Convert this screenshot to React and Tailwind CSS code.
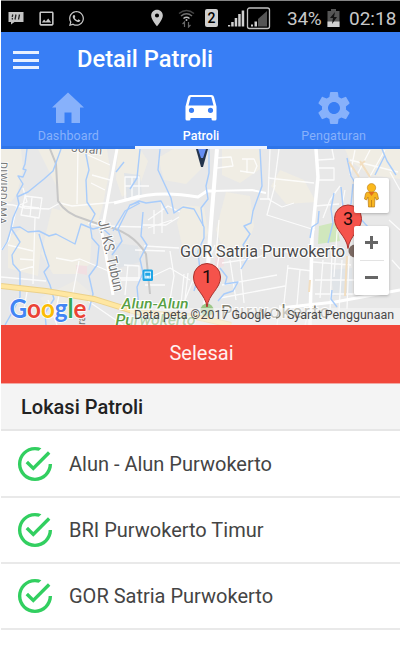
import React from "react";
import { IoMdCheckmarkCircleOutline } from "react-icons/io";
import { MdLocationOn, MdOutlineImage, MdSettings } from "react-icons/md";
import { FaWhatsapp } from "react-icons/fa";

function BbmIcon() {
  return (
    <svg className="h-4 w-4" viewBox="0 0 16 16">
      <path d="M.500 2h15v10h-9l-3.500 2.500V12H.500z" fill="#c4c4c4" />
      <path d="M4.800 4.500l-.6 2.500M8 4.500l-1 5M11.500 4.500l-1 5M4.500 8l-.3 1.500" stroke="#222" strokeWidth="1.300" />
    </svg>
  );
}

function WifiIcon() {
  return (
    <svg className="h-[19px] w-[17px]" viewBox="0 0 17 19" fill="none">
      <path d="M1 4.500q7.500-6 15 0" stroke="#444" strokeWidth="1.500" />
      <path d="M3 7q5.500-4.500 11 0" stroke="#707070" strokeWidth="1.500" />
      <path d="M5.500 9.500q3-2.500 6 0" stroke="#bbb" strokeWidth="1.500" />
      <circle cx="8.500" cy="11" r="1" fill="#bbb" />
      <path d="M6.500 18v-5l-2 2M10.500 13v5l2-2" stroke="#666" strokeWidth="1.200" />
    </svg>
  );
}

function SignalIcons() {
  return (
    <svg className="h-[23px] w-[44px]" viewBox="0 0 44 23">
      <g fill="#d0d0d0">
        <path d="M1 18h2.200v1.500H1zM4.200 15h2.500v4.500H4.200zM7.700 11h2.500v8.500H7.700zM11.200 7h2.500v12.500h-2.500zM14.700 3.500h2.500v16h-2.500z" />
        <path d="M24 17.500h2v2h-2zM27.500 14.500h2.500v5h-2.500z" />
      </g>
      <path d="M31 12l9-8v15.500h-9z" fill="#555" />
      <rect x="20.500" y="1" width="22" height="20.500" rx="2" fill="none" stroke="#c0c0c0" strokeWidth="1.300" />
    </svg>
  );
}

function BatteryIcon() {
  return (
    <svg className="h-[18px] w-[13px]" viewBox="0 0 13 18">
      <path d="M4 0h5v2h3.500v16H.500V2H4z" fill="#555" />
      <path d="M.500 12.500h12V18H.500z" fill="#d0d0d0" />
      <path d="M8 3L3 9h3l-1 6 5-7H7z" fill="#111" />
    </svg>
  );
}

function StatusBar() {
  return (
    <div className="flex h-8 items-center border-t border-[#858585] bg-black pt-[3px] text-[#c8c8c8]">
      <div className="ml-[7px]"><BbmIcon /></div>
      <MdOutlineImage className="ml-[13px] h-[19px] w-[19px]" />
      <FaWhatsapp className="ml-[12px] h-[17px] w-[17px]" />
      <MdLocationOn className="ml-[62px] h-5 w-5" />
      <div className="ml-[11px]"><WifiIcon /></div>
      <div className="ml-[10px] flex h-[18px] w-[13px] items-center justify-center rounded-[2px] bg-[#cfcfcf] text-[14px] font-medium leading-none text-black">2</div>
      <div className="ml-[9px]"><SignalIcons /></div>
      <span className="ml-[16px] w-[36px] whitespace-nowrap text-[19px] leading-none tracking-[-0.3px]">34%</span>
      <div className="ml-[4px]"><BatteryIcon /></div>
      <span className="ml-[9px] whitespace-nowrap text-[19px] leading-none">02:18</span>
    </div>
  );
}

function HomeIcon() {
  return (
    <svg className="h-[38px] w-[38px]" viewBox="0 0 38 38" fill="currentColor">
      <path d="M19 3.500l16 15h-4v15.500h-8.500V23.500h-7V34H7V18.500H3z" />
    </svg>
  );
}

function CarIcon() {
  return (
    <svg className="h-[38px] w-[38px]" viewBox="0 0 38 38" fill="currentColor">
      <path
        fillRule="evenodd"
        d="M8.500 6h21q2 0 2.500 2l2.500 9.500V30q0 1.500-1.500 1.500h-2q-1.500 0-1.500-1.500v-1h-21v1q0 1.500-1.500 1.500H5q-1.500 0-1.500-1.500V17.500L6 8q.5-2 2.500-2zM8.700 8L6.500 16.500h25L29.300 8zM9.500 18.700a2.600 2.600 0 1 0 0 5.200 2.600 2.600 0 0 0 0-5.200zM28.500 18.700a2.600 2.600 0 1 0 0 5.200 2.600 2.600 0 0 0 0-5.200z"
      />
    </svg>
  );
}

function GearIcon() {
  return <MdSettings className="h-[40px] w-[40px] shrink-0" />;
}

function Tab({ icon: Icon, label, active }) {
  return (
    <div className={`flex flex-1 flex-col items-center border-b-[3px] ${active ? "border-[#eef4ff] text-white" : "border-[#2f75e8] text-[#87b1fb]"}`}>
      <div className="flex h-[37px] items-center"><Icon /></div>
      <span className={`mt-[1.5px] text-[12.5px] leading-4 ${active ? "font-medium" : "tracking-[0.1px]"}`}>{label}</span>
    </div>
  );
}

function Pin({ x, y, label }) {
  return (
    <g transform={`translate(${x} ${y})`}>
      <path d="M0 0C-1.500-13-13.500-18-13.500-30a13.500 13.500 0 0 1 27 0C13.500-18 1.500-13 0 0z" fill="#f5534b" stroke="#a9332d" strokeWidth="1" />
      <text x="0" y="-24" textAnchor="middle" fontSize="18" fill="#1a0b0b">{label}</text>
    </g>
  );
}

function CityMap() {
  return (
    <svg className="block h-full w-full" viewBox="1 149 399 176" preserveAspectRatio="none">
      <rect x="1" y="149" width="399" height="176" fill="#e8e8e8" />
      <g fill="#f0ede4">
        <path d="M1 149h20l2 20-6 25-6 8-10-2z" />
        <path d="M38 149h69l3 20-8 40-5 16-20 4-17-20-3-22-8-16z" />
        <path d="M52 208l28 8 12 14-2 34-12 10-25 0-12-20z" />
        <path d="M118 149h22l8 12-8 24-18 12-6-18z" />
        <path d="M173 149h30l-2 20-15 15-22-4-6-22z" />
        <path d="M182 205l22 2 4 26-12 20-14-8-5-22z" />
        <path d="M226 192l24 4 4 30-10 30-20-4-8-22z" />
        <path d="M222 149h38v20l-20 14-18-8z" />
        <path d="M280 170l24 10 12 22-30 2-15-18z" />
        <path d="M345 149h55v30l-30-4-20-14z" />
        <path d="M8 238l14-10 20 8-4 40-30-8z" />
        <path d="M40 298l36-18 14 12-6 20-30 4z" opacity=".6" />
      </g>
      <path d="M319 226l17-4 4 19-22 3z" fill="#d0e7bd" />
      <path d="M76 265l11 1v9l-10-2zM215 258l9-2v10l-9 3z" fill="#f1dfe2" />
      <path d="M110 242l28 4 2 16-28 8zM330 270l22-2v26l-18 2zM124 173l16 2 2 20-15 4z" fill="#e0e4e8" />
      <g fill="none" stroke="#fff" strokeWidth="1.300" strokeLinejoin="round" opacity=".85">
        <path d="M1 204l12 1 12 3 24 1 11-6 12 3 45-4 22-7" />
        <path d="M25 196l17 2-3 20-18-3z M32 197l-2 20M22 206l17 2M35 218l-2 66M1 250l8-10 5-21 3-13 10-4-4-14M8 245l25 6M20 259l14 1M20 270l14-4" />
        <path d="M78 149l-1 55M56 258l16 3 8-2 26 11 12 5M79 261l-7 37M60 290l-5 25M103 226l40 1M108 228l-20-5M110 180l-18-5M105 190l-14-7M88 155l22 10" />
        <path d="M125 177h14v22h-14zM132 177v22M125 186h24M124 265l15 1v14h-18M128 265l-3 30M112 278h30" />
        <path d="M142 225h24l13-8M148 220l20-14 12 6M148 228l24-8M154 210v24M162 203v30M144 246l35 2M135 250l30 1M153 276l17-8 20 12M170 251l4 25-4 24M145 285h20M184 274l-3 30M188 273l-4 35M193 280l-10 25" />
        <path d="M215 158l16-1 2 9-16 2M242 159h12l3 7-3 7-14-2M247 159v14M219 220l-3 35M215 245l-6 14M220 250l-4 24M222 263l35-5 20-10M230 260l6 40M240 258l4 45M222 285l55-10M220 298l65-12" />
        <path d="M270 149l-2 50 14 8 12-4M279 149l-5 38M268 178l46 5M270 199h-10M275 185l-8 30 48 15M318 160l16-1-2-10M318 168h16v12h-16M260 248l54 8M288 265l-4 38M288 268l24 3M300 270l-3 35" />
        <path d="M315 206l24-2M340 186l-10 14-7 18M345 190l-8 42-3 45M313 262l38 3M323 260l-3 38M332 252l-2 60M342 260l-3 51M349 256l-2 53M315 280h43M315 294h42" />
        <path d="M355 150l-5 25M370 150l-13 25M385 150l-20 35M350 160l48 12M390 172l10 18M389 220l11 10M392 260l8 9" />
        <path d="M1 277l45 4M28 286l-5 29M88 301l35 24M48 300l9 25M280 305l-3 20M310 305l-5 20" />
      </g>
      <path d="M50 149l6 15 2 37q8 13 26 18l20 7q28 5 42 28l4 40" fill="none" stroke="#c7c7c7" strokeWidth="2" />
      <g fill="none" stroke="#fff" strokeLinejoin="round">
        <path d="M117 149l-15 82M102 233l11 62" strokeWidth="3" />
        <path d="M114 203l16-4q28-9 68-2l9-6h9" strokeWidth="3" />
        <path d="M217 149l-6 74-7 99" strokeWidth="4" />
        <path d="M316 149l2 28-6 60-2 88" strokeWidth="3.500" />
        <path d="M212 191l40-1 14 3" strokeWidth="2" />
        <path d="M280 308l55-6 65-12" strokeWidth="3" />
      </g>
      <g fill="none" stroke="#a8ccfb" strokeWidth="1.400" strokeLinejoin="round">
        <path d="M27 149l-2 15-2 5 3 1-3 7-5-1 5 8-6 11 2 9-6 14-2 10 9-1 8 5 11-1 10 5 7-2 19 10 6-20 12 5 8-2 9 8" />
        <path d="M61 149l-8 22-9 8-16 13-11 5M11 229l-4 13-5 8M11 228l9 14-8 13 1 9 7 8v25l-6 12-9 16M39 234l6 20 4 12-5 6 6 13 4 14-9 14 1 12M85 149l4 21-3 10 1 22 8 12-5 10 2 14 7 8-2 19-8 11 4 18-4 16M113 231l12-20 15-8M112 255l10-14-4-12" />
        <path d="M124 162l-8 10M139 202l-9 3-13 26M140 149l-3 29-7 11M160 149l-2 21 13 28 3 15 9-6 11 2 10 18v11l-6 13 2 20-6 20M131 205l8-4 7 2 15-2 7 13M143 212l-2 24 6 9-7 14 3 14-6 14 2 22" />
        <path d="M209 149v24l-3 13 2 13-7 9 2 18M260 149l2 37-9 25-2 12-7 3 6 8-7 11 6 11-8 13M220 268l7 9-2 7 13-2-5 9-9 3-6 7" />
        <path d="M347 158l4 18 6 10M353 184l-2 20-7 8 5 20M334 193l-3 16 2 14-5 20M319 211l-1 12-6 4-2 11M341 187l2 20M357 215l11 12M332 290l-1 9 6 8" />
        <path d="M382 149l5 12 9 14M385 155l-10 20" />
      </g>
      <path d="M349 162l10 15M360 161l10 16M365 161l-5 4M310 280l-1 12M347 256l-2 40" fill="none" stroke="#f2dec0" strokeWidth="2" />
      <path d="M1 286l45 5 48 8 42 13 60 5 35 8" fill="none" stroke="#ecd18a" strokeWidth="6" />
      <path d="M1 286l45 5 48 8 42 13 60 5 35 8" fill="none" stroke="#ffe7a2" strokeWidth="4" />
      <g fill="#777">
        <text x="71" y="151.500" fontSize="12" textLength="31" lengthAdjust="spacingAndGlyphs" transform="rotate(6 71 151.500)" stroke="#fff" strokeWidth="1.500" paintOrder="stroke">Joran</text>
        <text x="0" y="162" fontSize="10.500" textLength="62" transform="rotate(91 0 162)" stroke="#fff" strokeWidth="1.500" paintOrder="stroke">DIWIRDAMA</text>
        <text x="98" y="221" fontSize="14.500" textLength="73" lengthAdjust="spacingAndGlyphs" transform="rotate(77 98 221)" stroke="#fff" strokeWidth="2" paintOrder="stroke">Jl. KS. Tubun</text>
        <text x="85" y="325" fontSize="11" transform="rotate(-88 85 325)">ra</text>
      </g>
      <g transform="translate(142.500 269.500)">
        <rect width="10.500" height="11.500" rx="1.500" fill="#20a5e6" />
        <path d="M2 2h6.500v7H2z" fill="#e7f7ff" />
        <path d="M3 3.500h4.500V6H3zM3 7.500h1.200M6.300 7.500h1.200" fill="#20a5e6" stroke="#20a5e6" strokeWidth=".6" />
      </g>
      <circle cx="207" cy="310" r="6.500" fill="#9bc786" />
      <g fill="#58a044" fontStyle="italic" fontWeight="500" stroke="#fff" strokeWidth="2" paintOrder="stroke">
        <text x="121.500" y="308.500" fontSize="14.500" textLength="67" lengthAdjust="spacingAndGlyphs">Alun-Alun</text>
        <text x="115.500" y="325" fontSize="14.500" textLength="80" lengthAdjust="spacingAndGlyphs">Purwokerto</text>
      </g>
      <text x="221" y="318" fontSize="18" textLength="109" fill="#84806f" stroke="#fff" strokeWidth="2" paintOrder="stroke">Purwokerto</text>
      <path d="M196 149h12l-5 18h-2z" fill="#24344c" />
      <path d="M198 149h8l-3 9h-2z" fill="#648df2" />
      <Pin x={207} y={307} label="1" />
      <circle cx="355" cy="251" r="6.500" fill="#7b6962" />
      <Pin x={348} y={248.5} label="3" />
      <text x="180" y="256.500" fontSize="17" textLength="165" lengthAdjust="spacingAndGlyphs" fill="#4b4b4b" stroke="#fff" strokeWidth="2" paintOrder="stroke">GOR Satria Purwokerto</text>
      <rect x="130" y="308" width="270" height="17" fill="#f5f5f5" opacity=".6" />
      <g fontSize="12" fill="#4a4a4a">
        <text x="134" y="318.500" textLength="137" lengthAdjust="spacingAndGlyphs">Data peta ©2017 Google</text>
        <path d="M276 310a4 4 0 0 1 0 8" fill="none" stroke="#817d70" strokeWidth="1.500" />
        <text x="287" y="318.500" textLength="107" lengthAdjust="spacingAndGlyphs">Syarat Penggunaan</text>
      </g>
    </svg>
  );
}

function GoogleLogo() {
  return (
    <svg className="h-[32px] w-[82px]" viewBox="0 0 82 32" fill="none">
      <text
        x="1.500" y="20.500" fontSize="26" fontWeight="700" textLength="77" lengthAdjust="spacingAndGlyphs"
        stroke="#fff" strokeWidth="1.500" paintOrder="stroke"
        className="font-[Lato,Roboto,sans-serif]"
      >
        <tspan fill="#4285f4">G</tspan><tspan fill="#ea4335">o</tspan><tspan fill="#fbbc05">o</tspan><tspan fill="#4285f4">g</tspan><tspan fill="#34a853">l</tspan><tspan fill="#ea4335">e</tspan>
      </text>
    </svg>
  );
}

function MapControls() {
  return (
    <div className="flex flex-col gap-[13px]">
      <div className="flex h-[35px] w-[35px] items-center justify-center rounded-[2px] bg-white shadow-[0_1px_3px_rgba(0,0,0,0.25)]">
        <svg className="h-[25px] w-[15px]" viewBox="0 0 15 25">
          <path d="M4 9h7q2 0 2.500 2l1 5-2 1-1.500-3-.5 10H4.500L4 14l-1.500 3-2-1 1-5Q2 9 4 9z" fill="#f7b521" stroke="#b97b17" strokeWidth=".7" />
          <circle cx="7.500" cy="4.800" r="4.200" fill="#fbb91c" stroke="#b97b17" strokeWidth=".6" />
          <path d="M4.500 9l3 4 3-4z" fill="#e06d22" />
          <path d="M7.500 17v7" stroke="#b97b17" strokeWidth=".8" />
        </svg>
      </div>
      <div className="flex h-[69px] w-[35px] flex-col items-center rounded-[2px] bg-white shadow-[0_1px_3px_rgba(0,0,0,0.25)]">
        <svg className="h-[34px] w-[13px]" viewBox="0 0 13 34"><path d="M0 16.500h13M6.500 10v13" stroke="#666" strokeWidth="3" /></svg>
        <div className="h-px w-6 bg-[#e3e3e3]" />
        <svg className="h-[34px] w-[13px]" viewBox="0 0 13 34"><path d="M0 16.500h13" stroke="#666" strokeWidth="3" /></svg>
      </div>
    </div>
  );
}

function PatrolRow({ name }) {
  return (
    <li className="flex h-[66.3px] items-center border-b-2 border-[#e9e9e9] pl-[13px] text-[#444]">
      <IoMdCheckmarkCircleOutline className="h-[42px] w-[42px] shrink-0 text-[#32cf60]" />
      <span className="ml-[13px] whitespace-nowrap text-[20px] leading-none">{name}</span>
    </li>
  );
}

export default function App() {
  return (
    <div className="h-[668px] w-[400px] overflow-hidden bg-white pl-px font-[Roboto,sans-serif]">
      <StatusBar />
      <header className="h-[117px] bg-[#387ef5]">
        <div className="flex h-[57px] items-center pb-[2px] pl-[12px] text-white">
          <div className="mt-[1px] flex w-[26px] flex-col gap-[4.5px]">
            <div className="h-[3px] bg-[#e8f0ff]" />
            <div className="h-[3px] bg-[#e8f0ff]" />
            <div className="h-[3px] bg-[#e8f0ff]" />
          </div>
          <h1 className="ml-[38px] whitespace-nowrap text-[23.7px] font-medium leading-none">Detail Patroli</h1>
        </div>
        <nav className="flex h-[60px] pl-px">
          <Tab icon={HomeIcon} label="Dashboard" />
          <Tab icon={CarIcon} label="Patroli" active />
          <Tab icon={GearIcon} label="Pengaturan" />
        </nav>
      </header>
      <section className="relative h-[176px] overflow-hidden">
        <CityMap />
        <div className="absolute left-[7px] top-[148px]"><GoogleLogo /></div>
        <div className="absolute right-[11px] top-[29px]"><MapControls /></div>
      </section>
      <button className="block h-[58px] w-full bg-[#f1473a] pb-[2px] pl-[2px] text-[20px] leading-none text-[#fff1f0]">Selesai</button>
      <h2 className="flex h-[48.4px] items-center border-b-2 border-t border-[#e6e6e6] border-t-[#f2a8a2] bg-[#f4f4f4] pl-[20px] text-[20px] font-medium leading-none text-[#222]">Lokasi Patroli</h2>
      <ul>
        <PatrolRow name="Alun - Alun Purwokerto" />
        <PatrolRow name="BRI Purwokerto Timur" />
        <PatrolRow name="GOR Satria Purwokerto" />
      </ul>
    </div>
  );
}
